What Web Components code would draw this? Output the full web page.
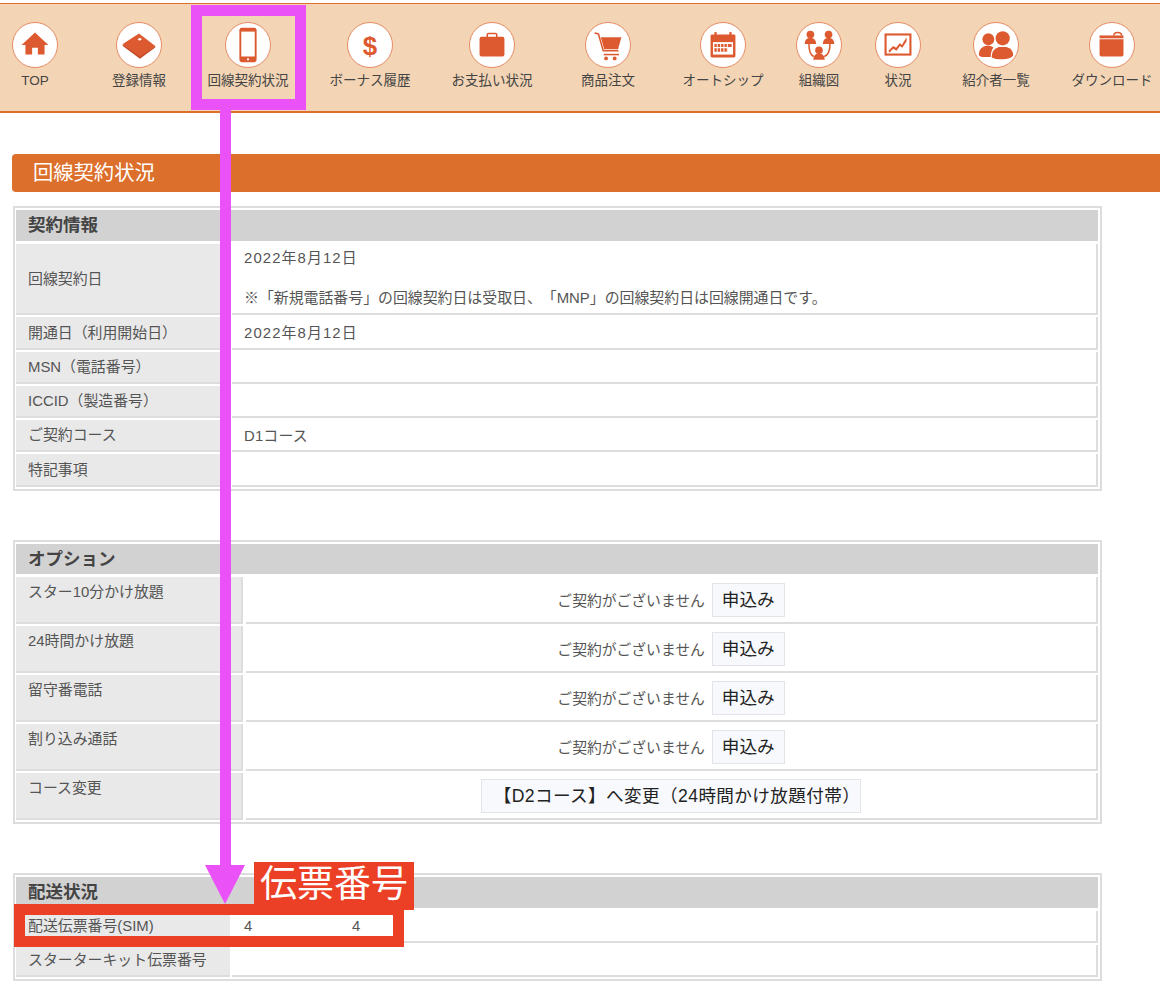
<!DOCTYPE html>
<html lang="ja">
<head>
<meta charset="utf-8">
<title>回線契約状況</title>
<style>
    html, body{ margin: 0; padding: 0; background: #fff; }
    body{
        width: 1160px;
        height: 992px;
        overflow: hidden;
        position: relative;
        padding-top: 3px;
        box-sizing: border-box;
        font-family: "Liberation Sans", "Noto Sans CJK JP", sans-serif;
        text-spacing-trim: space-all;
        color: #555;
    }
</style>
</head>
<body>
<site-nav>
    <nav-item label="TOP" w="70"><svg viewBox="0 0 46 46"><path d="M23 10 L37 23 H33 V33 H26 V26 H20 V33 H13 V23 H9 Z"/></svg></nav-item>
    <nav-item label="登録情報" w="138"><svg viewBox="0 0 46 46"><path d="M6 22 L23 11 L40 24 L24 36 Z"/><path d="M6 22 L24 35 L40 24 V25.5 L24 37.5 L6 24 Z" fill="#c64c28"/><path d="M21.5 17 L24 15.5 L26 17 L23.5 18.5 Z" fill="#fff"/></svg></nav-item>
    <nav-item label="回線契約状況" w="80"><svg viewBox="0 0 46 46"><rect x="14" y="5" width="18" height="36" rx="2.5"/><rect x="16" y="9" width="14" height="26" fill="#fff"/><rect x="22" y="37" width="2" height="2" fill="#fff"/></svg></nav-item>
    <nav-item label="ボーナス履歴" w="164"><svg viewBox="0 0 46 46"><text x="23" y="33" text-anchor="middle" font-family="Liberation Sans" font-weight="700" font-size="27">$</text></svg></nav-item>
    <nav-item label="お支払い状況" w="80"><svg viewBox="0 0 46 46"><path d="M18 15 V12.5 Q18 11 19.5 11 H26.5 Q28 11 28 12.5 V15" fill="none" stroke="#dd5a30" stroke-width="1.6"/><rect x="10" y="14.5" width="26" height="20.5" rx="2"/></svg></nav-item>
    <nav-item label="商品注文" w="152"><svg viewBox="0 0 46 46"><path d="M9 10.5 L13 11.5 L18 29 H34" fill="none" stroke="#dd5a30" stroke-width="1.6"/><path d="M15.5 15 H37 L33.5 27.5 H19 Z"/><path d="M18.5 33 H34.5" stroke="#dd5a30" stroke-width="1.6"/><circle cx="21" cy="37" r="2"/><circle cx="30" cy="37" r="2"/></svg></nav-item>
    <nav-item label="オートシップ" w="78"><svg viewBox="0 0 46 46"><rect x="10" y="12" width="26" height="24" rx="1.5"/><rect x="14" y="9.5" width="2.4" height="5"/><rect x="29.6" y="9.5" width="2.4" height="5"/><rect x="12.5" y="20" width="21" height="13" fill="#fff"/><path d="M14 22 H32 V25 H14 Z M14 26.5 H28 V30 H14 Z" fill="#dd5a30"/><path d="M17 21 V31 M20.5 21 V31 M24 21 V31 M27.5 21 V31" stroke="#fff" stroke-width="1"/></svg></nav-item>
    <nav-item label="組織図" w="114"><svg viewBox="0 0 46 46"><circle cx="14" cy="12" r="4"/><path d="M8 22 Q8 16 14 15.5 Q20 16 20 22 Z"/><circle cx="33" cy="12" r="4"/><path d="M27 22 Q27 16 33 15.5 Q39 16 39 22 Z"/><circle cx="23" cy="28.5" r="4"/><path d="M17 38.5 Q17 32 23 31.5 Q29 32 29 38.5 Z"/><path d="M12.5 22 Q12.5 33 17.5 35 M34.5 22 Q34.5 33 28.5 35" fill="none" stroke="#dd5a30" stroke-width="1.6"/></svg></nav-item>
    <nav-item label="状況" w="44"><svg viewBox="0 0 46 46"><rect x="10" y="12" width="26" height="21" fill="none" stroke="#dd5a30" stroke-width="2.2"/><path d="M13 29 L18 24 L21 26 L25 21 L27 23 L32 15 L32 19 L27.5 26 L25 24 L21.5 29 L18 27 L14 31 Z"/></svg></nav-item>
    <nav-item label="紹介者一覧" w="152"><svg viewBox="0 0 46 46"><circle cx="15" cy="17" r="6.2"/><path d="M5 33 Q5 25 14 23.5 Q18 23.5 20.5 25.5 Q17.5 29 17.5 35.5 H8 Q5 35 5 33 Z"/><circle cx="30" cy="16" r="7.4"/><path d="M18.5 36 Q18.5 27 26 25 H34 Q41 27 41 34 Q38 38 30 38 Q22 38 18.5 36 Z"/></svg></nav-item>
    <nav-item label="ダウンロード" w="80"><svg viewBox="0 0 46 46"><path d="M25 13 Q25 10 29 10 Q33 10 33 13" fill="none" stroke="#dd5a30" stroke-width="1.6"/><path d="M10 13 H35 V16 H10 Z"/><path d="M10 17 H35 V33 Q35 35 33 35 H12 Q10 35 10 33 Z"/></svg></nav-item>
</site-nav>

<page-title>回線契約状況</page-title>

<info-table heading="契約情報" style="--label-w:214px;margin-top:14px">
    <info-row label="回線契約日" h="71" mid>
        <div style="margin-top:-1px;line-height:22px;letter-spacing:1.1px">2022年8月12日</div>
        <div style="margin-top:18px;line-height:22px">※「新規電話番号」の回線契約日は受取日、「MNP」の回線契約日は回線開通日です。</div>
    </info-row>
    <info-row label="開通日（利用開始日）" h="33" mid><div style="letter-spacing:1.1px;margin-top:-2px">2022年8月12日</div></info-row>
    <info-row label="MSN（電話番号）" h="32" mid></info-row>
    <info-row label="ICCID（製造番号）" h="32" mid></info-row>
    <info-row label="ご契約コース" h="32" mid><div style="margin-top:-2px;letter-spacing:.15px">D1コース</div></info-row>
    <info-row label="特記事項" h="33" mid></info-row>
</info-table>

<info-table heading="オプション" style="--label-w:227px;--head-h:30px;margin-top:49px">
    <info-row label="スター10分かけ放題" h="47" center><none-note>ご契約がございません</none-note><action-button>申込み</action-button></info-row>
    <info-row label="24時間かけ放題" h="47" center><none-note>ご契約がございません</none-note><action-button>申込み</action-button></info-row>
    <info-row label="留守番電話" h="47" center><none-note>ご契約がございません</none-note><action-button>申込み</action-button></info-row>
    <info-row label="割り込み通話" h="47" center><none-note>ご契約がございません</none-note><action-button>申込み</action-button></info-row>
    <info-row label="コース変更" h="47" center><action-button wide>【D2コース】へ変更（24時間かけ放題付帯）</action-button></info-row>
</info-table>

<info-table heading="配送状況" style="--label-w:214px;margin-top:49px">
    <info-row label="配送伝票番号(SIM)" h="32" mid><span style="display:inline-block;width:108px">4</span><span>4</span></info-row>
    <info-row label="スターターキット伝票番号" h="32" mid></info-row>
</info-table>

<call-outs></call-outs>

<script>
const SiteNavTemplate = document.createElement('template');
SiteNavTemplate.innerHTML = `
    <style>
        :host{
            display: flex;
            box-sizing: border-box;
            height: 110px;
            background-color: #f3d5b5;
            border-top: 1px solid #dc6f2c;
            border-bottom: 2px solid #dc6f2c;
        }
    </style>
    <slot></slot>
`

class SiteNav extends HTMLElement {
    constructor(){
        super();
        this.attachShadow({mode: 'open'});
        this.shadowRoot.append( SiteNavTemplate.content.cloneNode(true) );
    }
}

const NavItemTemplate = document.createElement('template');
NavItemTemplate.innerHTML = `
    <style>
        :host{
            display: flex;
            flex-direction: column;
            align-items: center;
            flex-shrink: 0;
            padding-top: 18px;
            box-sizing: border-box;
        }
        .nav-icon{
            width: 44px;
            height: 44px;
            border-radius: 50%;
            background-color: #fff;
            border: 1.5px solid #e58a63;
            fill: #dd5a30;
            display: flex;
        }
        ::slotted(svg){
            width: 100%;
            height: 100%;
        }
        .nav-label{
            margin-top: 3px;
            font-size: 13.5px;
            line-height: 20px;
            color: #444;
            white-space: nowrap;
        }
    </style>
    <div class='nav-icon'><slot></slot></div>
    <div class='nav-label'></div>
`

class NavItem extends HTMLElement {
    constructor(){
        super();
        this.attachShadow({mode: 'open'});
        this.shadowRoot.append( NavItemTemplate.content.cloneNode(true) );
    }
    connectedCallback(){
        this.style.width = this.getAttribute('w') + 'px';
        this.shadowRoot.querySelector('.nav-label').textContent = this.getAttribute('label');
    }
}

const PageTitleTemplate = document.createElement('template');
PageTitleTemplate.innerHTML = `
    <style>
        :host{
            display: block;
            margin: 41px 0 0 12px;
            height: 38px;
            line-height: 38px;
            padding-left: 21px;
            background-color: #dc6f2c;
            border-radius: 4px 0 0 4px;
            color: #fff;
            font-size: 20.3px;
        }
    </style>
    <slot></slot>
`

class PageTitle extends HTMLElement {
    constructor(){
        super();
        this.attachShadow({mode: 'open'});
        this.shadowRoot.append( PageTitleTemplate.content.cloneNode(true) );
    }
}

const InfoTableTemplate = document.createElement('template');
InfoTableTemplate.innerHTML = `
    <style>
        :host{
            display: block;
            box-sizing: border-box;
            width: 1089px;
            margin-left: 13px;
            padding: 2px 2px 2px 1px;
            border: 2px solid #ddd;
        }
        .table-heading{
            height: var(--head-h, 31px);
            line-height: var(--head-h, 31px);
            padding-left: 12px;
            margin-bottom: 3px;
            background-color: #d2d2d2;
            color: #444;
            font-size: 17.5px;
            font-weight: 700;
        }
        .table-rows{
            display: flex;
            flex-direction: column;
            row-gap: 2px;
        }
    </style>
    <div class='table-heading'></div>
    <div class='table-rows'><slot></slot></div>
`

class InfoTable extends HTMLElement {
    constructor(){
        super();
        this.attachShadow({mode: 'open'});
        this.shadowRoot.append( InfoTableTemplate.content.cloneNode(true) );
    }
    connectedCallback(){
        this.shadowRoot.querySelector('.table-heading').textContent = this.getAttribute('heading');
    }
}

const InfoRowTemplate = document.createElement('template');
InfoRowTemplate.innerHTML = `
    <style>
        :host{
            display: grid;
            grid-template-columns: var(--label-w) 1fr;
            column-gap: 2px;
            font-size: 14.9px;
            color: #555;
        }
        .row-label{
            box-sizing: border-box;
            padding: 5px 12px 0;
            background-color: #e9e9e9;
            border-right: 2px solid #ddd;
            border-bottom: 2px solid #ddd;
            line-height: 20px;
            white-space: nowrap;
        }
        :host([mid]) .row-label{
            display: flex;
            align-items: center;
            padding-top: 0;
            border-right: 0;
        }
        :host([mid]) .row-value{
            padding-left: 12px;
            display: flex;
            flex-direction: column;
            justify-content: center;
            align-items: flex-start;
        }
        :host([mid]) .row-value.inline{
            flex-direction: row;
            justify-content: flex-start;
            align-items: center;
        }
        :host([center]) .row-value{
            display: flex;
            justify-content: center;
            align-items: center;
            margin-left: 1px;
        }
        .row-value{
            box-sizing: border-box;
            border-right: 2px solid #ddd;
            border-bottom: 2px solid #ddd;
        }
    </style>
    <div class='row-label'></div>
    <div class='row-value'><slot></slot></div>
`

class InfoRow extends HTMLElement {
    constructor(){
        super();
        this.attachShadow({mode: 'open'});
        this.shadowRoot.append( InfoRowTemplate.content.cloneNode(true) );
    }
    connectedCallback(){
        this.style.height = this.getAttribute('h') + 'px';
        this.shadowRoot.querySelector('.row-label').textContent = this.getAttribute('label');
        if(this.querySelector('span')) this.shadowRoot.querySelector('.row-value').classList.add('inline');
    }
}

const NoneNoteTemplate = document.createElement('template');
NoneNoteTemplate.innerHTML = `
    <style>
        :host{
            display: inline-block;
            margin-right: 7px;
            font-size: 14.8px;
            color: #555;
        }
    </style>
    <slot></slot>
`

class NoneNote extends HTMLElement {
    constructor(){
        super();
        this.attachShadow({mode: 'open'});
        this.shadowRoot.append( NoneNoteTemplate.content.cloneNode(true) );
    }
}

const ActionButtonTemplate = document.createElement('template');
ActionButtonTemplate.innerHTML = `
    <style>
        :host{
            display: inline-block;
            box-sizing: border-box;
            height: 34px;
            line-height: 32px;
            padding: 0 9px;
            background-color: #f8f9fd;
            border: 1px solid #e2e4e8;
            color: #222;
            font-size: 17.6px;
            white-space: nowrap;
        }
        :host([wide]){
            padding: 0 0 0 12px;
            letter-spacing: .4px;
        }
    </style>
    <slot></slot>
`

class ActionButton extends HTMLElement {
    constructor(){
        super();
        this.attachShadow({mode: 'open'});
        this.shadowRoot.append( ActionButtonTemplate.content.cloneNode(true) );
    }
}

const CallOutsTemplate = document.createElement('template');
CallOutsTemplate.innerHTML = `
    <style>
        :host{
            display: block;
            position: absolute;
            left: 0;
            top: 0;
            width: 1160px;
            height: 992px;
            pointer-events: none;
        }
        .pink-box{
            position: absolute;
            left: 191px;
            top: 5px;
            width: 93px;
            height: 83px;
            border: 11px solid #ea52f8;
        }
        .pink-line{
            position: absolute;
            left: 220px;
            top: 110px;
            width: 11px;
            height: 756px;
            background-color: #ea52f8;
        }
        .pink-head{
            position: absolute;
            left: 205px;
            top: 865px;
            width: 0;
            height: 0;
            border-left: 20.5px solid transparent;
            border-right: 20.5px solid transparent;
            border-top: 39px solid #ea52f8;
        }
        .red-box{
            position: absolute;
            left: 14px;
            top: 904px;
            width: 368px;
            height: 21px;
            border: 11px solid #eb4025;
        }
        .red-tag{
            position: absolute;
            left: 254px;
            top: 862px;
            width: 160px;
            height: 48px;
            line-height: 46px;
            background-color: #eb4025;
            color: #fff;
            font-size: 37px;
            text-align: center;
        }
    </style>
    <div class='pink-box'></div>
    <div class='pink-line'></div>
    <div class='pink-head'></div>
    <div class='red-box'></div>
    <div class='red-tag'>伝票番号</div>
`

class CallOuts extends HTMLElement {
    constructor(){
        super();
        this.attachShadow({mode: 'open'});
        this.shadowRoot.append( CallOutsTemplate.content.cloneNode(true) );
    }
}

customElements.define('site-nav', SiteNav);
customElements.define('nav-item', NavItem);
customElements.define('page-title', PageTitle);
customElements.define('info-table', InfoTable);
customElements.define('info-row', InfoRow);
customElements.define('none-note', NoneNote);
customElements.define('action-button', ActionButton);
customElements.define('call-outs', CallOuts);
</script>
</body>
</html>
